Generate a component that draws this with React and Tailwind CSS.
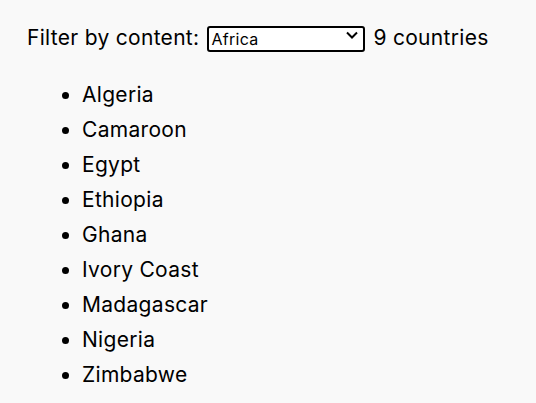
import { useState } from 'react'

const regions = {
  Africa: ['Algeria', 'Camaroon', 'Egypt', 'Ethiopia', 'Ghana', 'Ivory Coast', 'Madagascar', 'Nigeria', 'Zimbabwe'],
  Asia: ['China', 'India', 'Japan'],
  Europe: ['France', 'Germany', 'Italy'],
}

export default function App() {
  const [region, setRegion] = useState('Africa')
  const countries = regions[region]

  return (
    <div
      className="min-h-screen bg-[#f9f9f9] text-black px-[27px] pt-[22px] tracking-[0.3px]"
      style={{ fontFamily: 'Inter, "Open Sans", sans-serif' }}
    >
      <div className="flex items-center gap-[8px] text-[21px] leading-[32px]">
        <label htmlFor="region">Filter by content:</label>
        <div className="relative">
          <select
            id="region"
            value={region}
            onChange={(e) => setRegion(e.target.value)}
            className="appearance-none w-[158px] h-[26px] border-2 border-black rounded-[3px] bg-white pl-[2px] text-[16px] leading-none outline-none"
          >
            {Object.keys(regions).map((r) => (
              <option key={r} value={r}>{r}</option>
            ))}
          </select>
          <svg
            className="absolute right-[7px] top-[9px] pointer-events-none"
            width="12"
            height="8"
            viewBox="0 0 12 8"
            fill="none"
            stroke="black"
            strokeWidth="2"
          >
            <path d="M1 1.5l5 5 5-5" />
          </svg>
        </div>
        <span>{countries.length} countries</span>
      </div>

      <ul className="list-disc pl-[55px] mt-[23px] text-[21px] leading-[35px]">
        {countries.map((c) => (
          <li key={c}>{c}</li>
        ))}
      </ul>
    </div>
  )
}
